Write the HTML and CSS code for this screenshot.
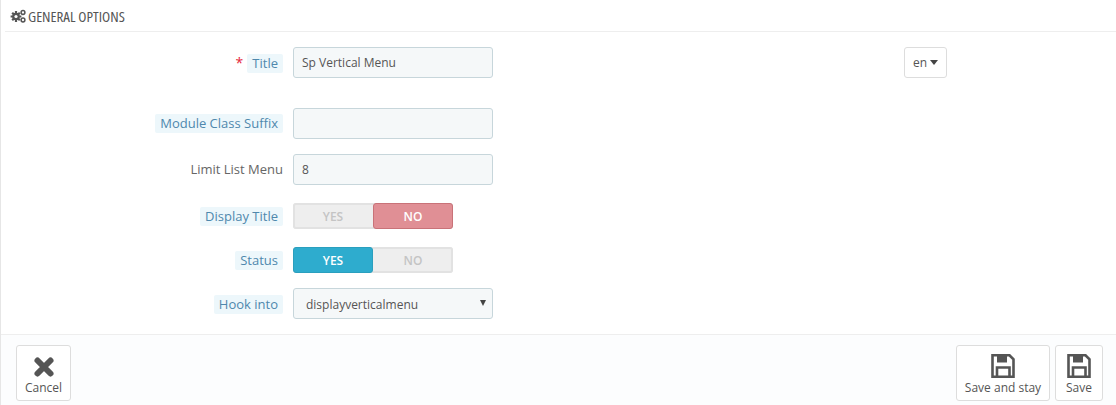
FILE: index.html
```html
<!DOCTYPE html>
<html lang="en">
<head>
    <meta charset="UTF-8">
    <title>General Options</title>
    <link rel="stylesheet" href="styles.css">
</head>
<body>
    <div class="panel">
        <div class="panel-heading">
            <svg class="heading-icon" viewBox="0 0 16 14" width="16" height="14">
                <circle cx="6" cy="7.500" r="3.800" fill="#555"/>
                <path d="M6 2v11M.6 7.500h10.800M2.200 3.700l7.600 7.600M9.800 3.700l-7.600 7.600" stroke="#555" stroke-width="2.200"/>
                <circle cx="6" cy="7.500" r="1.600" fill="#fff"/>
                <circle cx="13" cy="3.500" r="1.900" fill="none" stroke="#555" stroke-width="1.500"/>
                <circle cx="13" cy="11" r="1.900" fill="none" stroke="#555" stroke-width="1.500"/>
            </svg>
            <span class="heading-text">GENERAL OPTIONS</span>
        </div>
        <div class="form-body">
            <div class="form-row row-title">
                <div class="label-col"><span class="req">*</span><span class="hint">Title</span></div>
                <input class="text-input" type="text" value="Sp Vertical Menu">
                <button class="lang-btn">en <span class="caret"></span></button>
            </div>
            <div class="form-row row-gap-lg">
                <div class="label-col"><span class="hint">Module Class Suffix</span></div>
                <input class="text-input" type="text">
            </div>
            <div class="form-row row-gap">
                <div class="label-col"><span class="plain">Limit List Menu</span></div>
                <input class="text-input" type="text" value="8">
            </div>
            <div class="form-row row-switch">
                <div class="label-col"><span class="hint">Display Title</span></div>
                <div class="switch">
                    <span class="switch-side">YES</span>
                    <span class="switch-side side-no">NO</span>
                </div>
            </div>
            <div class="form-row row-switch">
                <div class="label-col"><span class="hint">Status</span></div>
                <div class="switch">
                    <span class="switch-side side-yes">YES</span>
                    <span class="switch-side">NO</span>
                </div>
            </div>
            <div class="form-row row-gap row-hook">
                <div class="label-col"><span class="hint">Hook into</span></div>
                <div class="select-box">
                    <span>displayverticalmenu</span>
                    <span class="select-arrow"></span>
                </div>
            </div>
        </div>
        <div class="panel-footer">
            <button class="foot-btn btn-cancel">
                <svg viewBox="0 0 22 22" width="22" height="22">
                    <path d="M4.500 4.500l13 13M17.500 4.500l-13 13" stroke="#555" stroke-width="6" stroke-linecap="round" fill="none"/>
                </svg>
                <span>Cancel</span>
            </button>
            <div class="foot-right">
                <button class="foot-btn btn-stay">
                    <svg viewBox="0 0 24 24" width="24" height="24">
                        <path d="M1.500 1.300h17l4 4V22.700H1.500z" fill="none" stroke="#555" stroke-width="2.600"/>
                        <path d="M6 1.500h10v7H6z" fill="#555"/>
                        <path d="M6 22.500v-9h12.500v9" fill="none" stroke="#555" stroke-width="2.600"/>
                    </svg>
                    <span>Save and stay</span>
                </button>
                <button class="foot-btn btn-save">
                    <svg viewBox="0 0 24 24" width="24" height="24">
                        <path d="M1.500 1.300h17l4 4V22.700H1.500z" fill="none" stroke="#555" stroke-width="2.600"/>
                        <path d="M6 1.500h10v7H6z" fill="#555"/>
                        <path d="M6 22.500v-9h12.500v9" fill="none" stroke="#555" stroke-width="2.600"/>
                    </svg>
                    <span>Save</span>
                </button>
            </div>
        </div>
    </div>
</body>
</html>
```

FILE: styles.css
```css
* {
    box-sizing: border-box;
}
html, body {
    height: 100%;
}
body {
    margin: 0;
    background: #fff;
    font-family: "Open Sans", sans-serif;
    font-size: 12px;
    color: #555;
    overflow: hidden;
}
.panel {
    height: 405px;
    border-left: 1px solid #e6e6e6;
    display: flex;
    flex-direction: column;
}
.panel-heading {
    height: 32px;
    margin-left: 4px;
    padding-left: 5px;
    border-bottom: 1px solid #eee;
    display: flex;
    align-items: center;
    gap: 2px;
    font-size: 15px;
    color: #555;
}
.heading-icon {
    flex: none;
}
.heading-text {
    font-stretch: 75%;
    white-space: nowrap;
}
.form-body {
    flex: 1;
    padding-top: 15px;
}
.form-row {
    display: flex;
    align-items: center;
}
.row-gap-lg {
    margin-top: 30px;
}
.row-gap {
    margin-top: 15px;
}
.row-switch {
    margin-top: 18px;
}
.label-col {
    width: 282px;
    margin-right: 10px;
    text-align: right;
    font-size: 13px;
    line-height: 19px;
}
.row-switch .label-col {
    padding-top: 1px;
}
.row-hook .label-col {
    padding-top: 2px;
}
.hint {
    display: inline-block;
    background: #edf7fb;
    color: #4f88ad;
    padding: 0 5px;
    border-radius: 2px;
}
.plain {
    color: #666;
}
.req {
    color: #e4273a;
    margin-right: 4px;
    font-size: 14px;
}
.text-input {
    width: 200px;
    height: 31px;
    padding: 0 8px;
    background: #f5f8f9;
    border: 1px solid #c7d6db;
    border-radius: 3px;
    font-family: inherit;
    font-size: 12px;
    color: #555;
}
.lang-btn {
    margin-left: 411px;
    width: 43px;
    height: 31px;
    padding: 0;
    background: #fff;
    border: 1px solid #ddd;
    border-radius: 3px;
    font-family: inherit;
    font-size: 12px;
    color: #555;
}
.caret {
    display: inline-block;
    vertical-align: 2px;
    border-style: solid;
    border-color: #444 transparent transparent;
    border-width: 5px 4.500px 0;
}
.switch {
    display: flex;
    width: 160px;
    height: 26px;
    background: #eee;
    border-radius: 3px;
    box-shadow: inset 0 0 0 2px #e2e2e2;
}
.switch-side {
    width: 80px;
    display: flex;
    align-items: center;
    justify-content: center;
    color: #c4c4c4;
    font-weight: 600;
    border-radius: 3px;
}
.side-no {
    background: #e08f95;
    border: 1px solid #c97278;
    color: #fff;
}
.side-yes {
    background: #2eacce;
    border: 1px solid #2a9fbe;
    color: #fff;
}
.select-box {
    width: 200px;
    height: 31px;
    padding: 2px 6px 0 12px;
    background: #f5f8f9;
    border: 1px solid #c7d6db;
    border-radius: 3px;
    display: flex;
    align-items: center;
    justify-content: space-between;
}
.select-arrow {
    border-style: solid;
    border-color: #444 transparent transparent;
    border-width: 6px 3px 0;
    margin-top: -3px;
}
.panel-footer {
    height: 71px;
    border-top: 1px solid #eee;
    background: #fcfdfe;
    padding: 10px 13px 0 15px;
    display: flex;
    justify-content: space-between;
    align-items: flex-start;
}
.foot-right {
    display: flex;
    gap: 5px;
}
.foot-btn {
    height: 56px;
    padding: 0 0 4px;
    background: #fff;
    border: 1px solid #ddd;
    border-radius: 3px;
    font-family: inherit;
    font-size: 12px;
    color: #555;
    display: flex;
    flex-direction: column;
    align-items: center;
    justify-content: flex-end;
    gap: 1px;
}
.btn-cancel {
    width: 55px;
}
.btn-stay {
    width: 94px;
}
.btn-save {
    width: 48px;
}
```
